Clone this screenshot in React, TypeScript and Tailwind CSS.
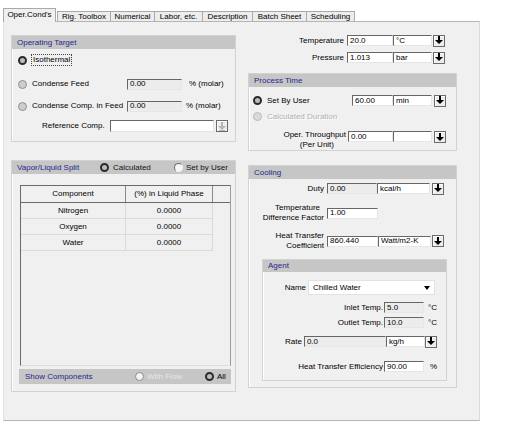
import type { ReactNode } from 'react';

type RadioKind = 'on' | 'off' | 'hollow' | 'ring' | 'dim';

function Radio({ kind }: { kind: RadioKind }) {
  if (kind === 'on')
    return <span className="block w-[9px] h-[9px] shrink-0 rounded-full border-2 border-[#2b2b2b] bg-[#bdbdbd]" />;
  if (kind === 'off')
    return <span className="block w-[9px] h-[9px] shrink-0 rounded-full border border-[#8e8e8e] bg-[#cdcdcd]" />;
  if (kind === 'hollow')
    return (
      <span className="block w-[9px] h-[9px] shrink-0 rounded-full border border-t-[#6e6e6e] border-l-[#6e6e6e] border-r-[#f4f4f4] border-b-[#f4f4f4] bg-[#f6f6f6]" />
    );
  if (kind === 'ring')
    return <span className="block w-[9px] h-[9px] shrink-0 rounded-full border border-[#8a8a8a] bg-[#f4f4f4]" />;
  return <span className="block w-[9px] h-[9px] shrink-0 rounded-full border border-[#b9b9b9] bg-[#dadada]" />;
}

// sunken edit box
function Field({ w, h = 'h-[11px]', value = '', gray = false }: { w: string; h?: string; value?: string; gray?: boolean }) {
  return (
    <div
      className={`${w} ${h} shrink-0 flex items-center pl-[2px] border border-t-[#666666] border-l-[#666666] border-r-[#e6e6e6] border-b-[#e6e6e6] ${
        gray ? 'bg-[#ececec]' : 'bg-white'
      }`}
    >
      {value}
    </div>
  );
}

function DropBtn({ dim = false }: { dim?: boolean }) {
  return (
    <div className="w-[12px] h-[12px] shrink-0 flex items-center justify-center border border-[#6a6a6a] bg-[#ededed] shadow-[inset_1px_1px_0_#ffffff]">
      <svg width="8" height="9" viewBox="0 0 8 9">
        <rect x="3" y="0" width="2" height="5" fill={dim ? '#b5b5b5' : '#000'} />
        <polygon points="0,4 8,4 4,8" fill={dim ? '#b5b5b5' : '#000'} />
        {dim && <rect x="1" y="8" width="6" height="1" fill="#b5b5b5" />}
      </svg>
    </div>
  );
}

function Group({ title, className, children }: { title: ReactNode; className: string; children?: ReactNode }) {
  return (
    <div className={`border border-[#d2d2d2] shadow-[inset_1px_1px_0_#ffffff] flex flex-col ${className}`}>
      <div className="h-[13px] shrink-0 bg-[#c6c6c6] px-[5px] flex items-center text-[#27278c]">{title}</div>
      {children}
    </div>
  );
}

const tabs = [
  { label: 'Rig. Toolbox', w: 'w-[53px]' },
  { label: 'Numerical', w: 'w-[44px]' },
  { label: 'Labor, etc.', w: 'w-[48px]' },
  { label: 'Description', w: 'w-[50px]' },
  { label: 'Batch Sheet', w: 'w-[54px]' },
  { label: 'Scheduling', w: 'w-[49px] border-r' },
];

const rows = [
  ['Nitrogen', '0.0000'],
  ['Oxygen', '0.0000'],
  ['Water', '0.0000'],
];

export default function App() {
  return (
    <div className="w-[506px] h-[423px] bg-white text-black text-[8px] leading-[10px] font-['Liberation_Sans',Arial,sans-serif]">
      {/* tab strip */}
      <div className="h-[21px] flex items-end pl-[3px]">
        <div className="w-[53px] h-[14px] -mb-[1px] relative z-10 bg-[#f0f0f0] border border-b-0 border-[#a9a9a9] flex items-center justify-center pb-[1px]">
          Oper.Cond's
        </div>
        <div className="w-[1px]" />
        {tabs.map((t) => (
          <div
            key={t.label}
            className={`${t.w} h-[10px] bg-[#ededed] border-t border-l border-[#a9a9a9] flex items-center justify-center`}
          >
            {t.label}
          </div>
        ))}
      </div>

      {/* page */}
      <div className="ml-[3px] w-[477px] h-[400px] bg-[#f0f0f0] border border-[#b5b5b5] border-r-[#dadada] border-l-[#e2e2e2] flex pl-[7px] pt-[13px] gap-[12px]">
        {/* left column */}
        <div className="w-[225px] flex flex-col">
          <Group title="Operating Target" className="h-[107px]">
            <div className="flex items-center h-[12px] mt-[5px] pl-[6px]">
              <Radio kind="on" />
              <span className="ml-[4px] px-[1px] border border-dotted border-[#444444]">Isothermal</span>
            </div>
            <div className="flex items-center h-[12px] mt-[12px] pl-[6px]">
              <Radio kind="off" />
              <span className="ml-[5px] w-[95px]">Condense Feed</span>
              <Field w="w-[55px]" value="0.00" gray />
              <span className="ml-[7px]">% (molar)</span>
            </div>
            <div className="flex items-center h-[12px] mt-[10px] pl-[6px]">
              <Radio kind="off" />
              <span className="ml-[5px] w-[95px]">Condense Comp. in Feed</span>
              <Field w="w-[55px]" value="0.00" gray />
              <span className="ml-[4px]">% (molar)</span>
            </div>
            <div className="flex items-center h-[12px] mt-[8px] pl-[30px]">
              <span className="w-[68px]">Reference Comp.</span>
              <Field w="w-[104px]" h="h-[12px]" />
              <div className="ml-[2px]">
                <DropBtn dim />
              </div>
            </div>
          </Group>

          <Group
            className="h-[232px] mt-[18px]"
            title={
              <div className="flex items-center w-full">
                <span className="w-[83px]">Vapor/Liquid Split</span>
                <Radio kind="on" />
                <span className="ml-[4px] w-[61px] text-[#111111]">Calculated</span>
                <Radio kind="hollow" />
                <span className="ml-[3px] text-[#111111]">Set by User</span>
              </div>
            }
          >
            <div className="ml-[8px] mt-[11px] w-[211px] h-[181px] border border-t-[#6a6a6a] border-l-[#6a6a6a] border-r-[#9c9c9c] border-b-[#dcdcdc] bg-[#f0f0f0] flex flex-col">
              <div className="h-[17px] flex border-b border-[#6a6a6a]">
                <div className="w-[105px] flex items-center justify-center border-r border-[#8a8a8a]">Component</div>
                <div className="w-[87px] flex items-center justify-center border-r border-[#8a8a8a]">(%) in Liquid Phase</div>
                <div className="flex-1" />
              </div>
              {rows.map(([name, val]) => (
                <div key={name} className="h-[16px] w-[192px] flex border-b border-[#dadada]">
                  <div className="w-[105px] flex items-center justify-center border-r border-[#dadada]">{name}</div>
                  <div className="flex-1 flex items-center justify-center border-r border-[#dadada]">{val}</div>
                </div>
              ))}
            </div>
            <div className="ml-[7px] mt-[3px] w-[212px] h-[15px] bg-[#c6c6c6] flex items-center pl-[6px]">
              <span className="w-[110px] text-[#27278c]">Show Components</span>
              <Radio kind="ring" />
              <span className="ml-[3px] w-[58px] text-[#e6e6e6]">With Flow</span>
              <Radio kind="on" />
              <span className="ml-[3px]">All</span>
            </div>
          </Group>
        </div>

        {/* right column */}
        <div className="w-[209px] flex flex-col">
          <div className="flex items-center h-[11px]">
            <span className="flex-1 text-right pr-[3px]">Temperature</span>
            <Field w="w-[46px]" value="20.0" />
            <Field w="w-[39px]" value="°C" />
            <div className="ml-[1px] mr-[12px]">
              <DropBtn />
            </div>
          </div>
          <div className="flex items-center h-[11px] mt-[6px]">
            <span className="flex-1 text-right pr-[3px]">Pressure</span>
            <Field w="w-[46px]" value="1.013" />
            <Field w="w-[39px]" value="bar" />
            <div className="ml-[1px] mr-[12px]">
              <DropBtn />
            </div>
          </div>

          <Group title="Process Time" className="h-[78px] mt-[10px]">
            <div className="flex items-center h-[11px] mt-[8px] pl-[4px]">
              <Radio kind="on" />
              <span className="ml-[5px] flex-1">Set By User</span>
              <Field w="w-[41px]" value="60.00" />
              <Field w="w-[39px]" value="min" />
              <div className="ml-[2px] mr-[10px]">
                <DropBtn />
              </div>
            </div>
            <div className="flex items-center h-[11px] mt-[5px] pl-[4px]">
              <Radio kind="dim" />
              <span className="ml-[5px] text-[#b0b0b0] [text-shadow:1px_1px_0_#ffffff]">Calculated Duration</span>
            </div>
            <div className="flex items-center h-[18px] mt-[9px]">
              <div className="flex-1 flex flex-col items-end pr-[2px]">
                <span>Oper. Throughput</span>
                <span className="pr-[12px]">(Per Unit)</span>
              </div>
              <div className="self-start">
                <Field w="w-[45px]" value="0.00" />
              </div>
              <div className="self-start">
                <Field w="w-[39px]" />
              </div>
              <div className="self-start ml-[2px] mr-[10px]">
                <DropBtn />
              </div>
            </div>
          </Group>

          <Group title="Cooling" className="h-[223px] mt-[14px]">
            <div className="flex items-center h-[11px] mt-[4px]">
              <span className="w-[78px] text-right pr-[3px]">Duty</span>
              <Field w="w-[50px]" value="0.00" gray />
              <Field w="w-[53px]" value="kcal/h" />
              <div className="ml-[2px]">
                <DropBtn />
              </div>
            </div>
            <div className="flex items-center h-[20px] mt-[9px]">
              <div className="w-[78px] flex flex-col items-end pr-[3px]">
                <span className="pr-[4px]">Temperature</span>
                <span>Difference Factor</span>
              </div>
              <Field w="w-[51px]" value="1.00" />
            </div>
            <div className="flex items-center h-[20px] mt-[8px]">
              <div className="w-[78px] flex flex-col items-end pr-[3px]">
                <span>Heat Transfer</span>
                <span>Coefficient</span>
              </div>
              <Field w="w-[51px]" value="860.440" />
              <Field w="w-[53px]" value="Watt/m2-K" />
              <div className="ml-[1px]">
                <DropBtn />
              </div>
            </div>

            <div className="ml-[13px] mt-[8px] w-[185px] h-[122px] border border-[#d2d2d2] shadow-[inset_1px_1px_0_#ffffff] flex flex-col">
              <div className="h-[12px] bg-[#c6c6c6] px-[5px] flex items-center text-[#27278c]">Agent</div>
              <div className="flex items-center h-[15px] mt-[8px]">
                <span className="w-[45px] text-right pr-[2px]">Name</span>
                <div className="w-[127px] h-[15px] bg-white border border-[#e2e2e2] flex items-center pl-[4px] pr-[4px]">
                  <span className="flex-1">Chilled Water</span>
                  <svg width="6" height="4" viewBox="0 0 6 4">
                    <polygon points="0,0 6,0 3,4" fill="#000" />
                  </svg>
                </div>
              </div>
              <div className="flex items-center h-[11px] mt-[7px]">
                <span className="w-[121px] text-right pr-[1px]">Inlet Temp.</span>
                <Field w="w-[40px]" value="5.0" gray />
                <span className="ml-[4px]">°C</span>
              </div>
              <div className="flex items-center h-[11px] mt-[4px]">
                <span className="w-[121px] text-right pr-[1px]">Outlet Temp.</span>
                <Field w="w-[40px]" value="10.0" gray />
                <span className="ml-[4px]">°C</span>
              </div>
              <div className="flex items-center h-[11px] mt-[8px] pl-[22px]">
                <span className="pr-[2px]">Rate</span>
                <Field w="w-[82px]" value="0.0" gray />
                <Field w="w-[39px]" value="kg/h" />
                <DropBtn />
              </div>
              <div className="flex items-center h-[11px] mt-[14px]">
                <span className="w-[121px] text-right pr-[1px]">Heat Transfer Efficiency</span>
                <Field w="w-[40px]" value="90.00" />
                <span className="ml-[6px]">%</span>
              </div>
            </div>
          </Group>
        </div>
      </div>
    </div>
  );
}
